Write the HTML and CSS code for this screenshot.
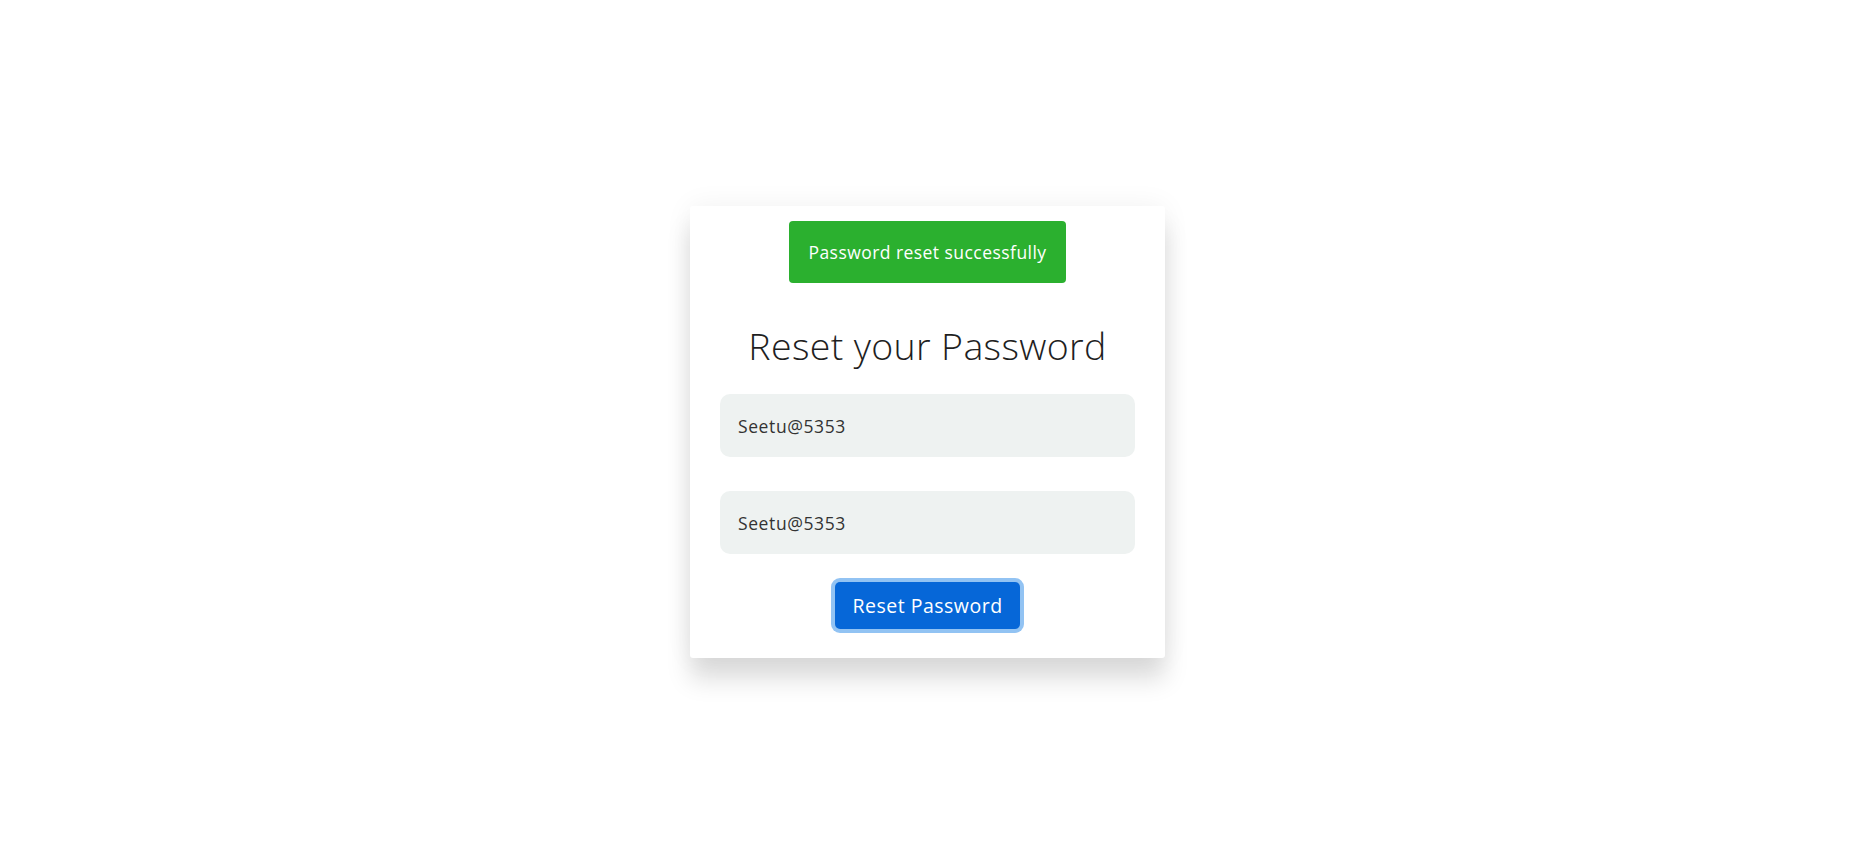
FILE: index.html
```html
<!DOCTYPE html>
<html lang="en">
<head>
<meta charset="utf-8">
<title>Reset your Password</title>
<link rel="stylesheet" href="styles.css">
</head>
<body>
<main class="page">
  <form class="card">
    <div class="alert">Password reset successfully</div>
    <h1 class="title">Reset your Password</h1>
    <input class="field" type="text" value="Seetu@5353">
    <input class="field field-second" type="text" value="Seetu@5353">
    <button class="btn" type="button">Reset Password</button>
  </form>
</main>
</body>
</html>
```
FILE: styles.css
```css
* { box-sizing: border-box; }
html, body { margin: 0; padding: 0; background: #ffffff; }
body { font-family: "Open Sans", "Liberation Sans", sans-serif; color: #222; }
.page {
  min-height: 861px;
  display: flex;
  align-items: flex-start;
  justify-content: center;
  padding-top: 206px;
}
.card {
  width: 475px;
  height: 452px;
  background: #fff;
  border-radius: 3px;
  box-shadow: 0 22px 24px rgba(0,0,0,0.13), 0 0 28px rgba(0,0,0,0.06);
  display: flex;
  flex-direction: column;
  align-items: center;
  padding: 15px 30px 0;
}
.alert {
  height: 62px;
  line-height: 62px;
  padding: 0 19px;
  background: #2bb02f;
  color: #fff;
  border-radius: 4px;
  font-size: 17.5px;
  letter-spacing: 0.45px;
}
.title {
  margin: 36px 0 0;
  height: 54px;
  line-height: 54px;
  font-size: 37.5px;
  font-weight: 300;
  color: #1f1f1f;
  letter-spacing: 0.35px;
}
.field {
  margin-top: 21px;
  width: 100%;
  height: 63px;
  border: none;
  border-radius: 10px;
  background: #eef2f1;
  padding: 0 18px;
  font-family: inherit;
  font-size: 17.5px;
  letter-spacing: 0.6px;
  color: #333;
  outline: none;
}
.field-second { margin-top: 34px; }
.btn {
  margin-top: 28px;
  height: 47px;
  padding: 0 17px;
  border: none;
  border-radius: 5px;
  background: #0667d8;
  color: #fff;
  font-family: inherit;
  font-size: 19.5px;
  letter-spacing: 0.5px;
  box-shadow: 0 0 0 4px #92c3f3;
  cursor: pointer;
}
```
